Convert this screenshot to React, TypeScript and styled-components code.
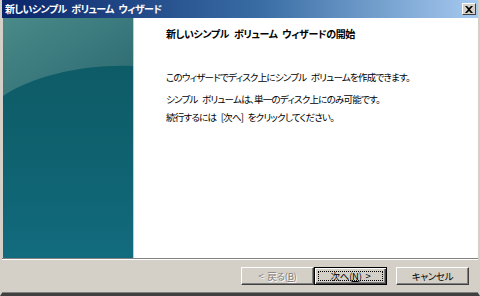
import styled, { createGlobalStyle } from 'styled-components';

const GlobalStyle = createGlobalStyle`
  html, body {
    margin: 0;
    padding: 0;
    background: #d4d0c8;
  }
  body {
    font-family: "Noto Sans CJK JP", "Liberation Sans", sans-serif;
  }
`;

const Window = styled.div`
  width: 480px;
  height: 296px;
  box-sizing: border-box;
  display: flex;
  flex-direction: column;
  background: #d4d0c8;
  border-left: 2px solid #d4d0c8;
  border-right: 2px solid #d4d0c8;
  border-bottom: 3px solid #404040;
  box-shadow: inset 0 -1px 0 #808080;
  font-feature-settings: "palt";
  word-spacing: 3px;
`;

const TitleBar = styled.div`
  height: 18px;
  flex: none;
  display: flex;
  align-items: center;
  justify-content: space-between;
  padding: 0 2px 0 3px;
  background: linear-gradient(90deg, #0a246a 0%, #3a6ea5 55%, #a6caf0 100%);
`;

const TitleText = styled.span`
  color: #ffffff;
  font-size: 10px;
  font-weight: 700;
  line-height: 18px;
  letter-spacing: -0.6px;
`;

const CloseButton = styled.div`
  width: 14px;
  height: 12px;
  box-sizing: border-box;
  background: #d4d0c8;
  border-top: 1px solid #ffffff;
  border-left: 1px solid #ffffff;
  border-right: 1px solid #404040;
  border-bottom: 1px solid #404040;
  display: flex;
  align-items: center;
  justify-content: center;
`;

const Body = styled.div`
  flex: none;
  height: 240px;
  display: flex;
  margin-left: 1px;
`;

const SidePanel = styled.div`
  width: 130px;
  flex: none;
  border-right: 1px solid #bcd0d4;
  background: linear-gradient(180deg, #0d5862 0%, #0f6270 60%, #126b7e 100%);
`;

const Content = styled.div`
  flex: 1;
  background: #ffffff;
  padding: 8px 20px 0 32px;
`;

const Heading = styled.h1`
  margin: 0 0 28px;
  font-size: 10px;
  font-weight: 700;
  line-height: 16px;
  letter-spacing: -0.4px;
  color: #000000;
`;

const Para = styled.p<{ $gap: number }>`
  margin: 0 0 ${(p) => p.$gap}px;
  font-size: 9.5px;
  line-height: 14px;
  letter-spacing: -0.75px;
  color: #000000;
`;

const Separator = styled.div`
  height: 0;
  flex: none;
  border-top: 1px solid #808080;
  border-bottom: 1px solid #ffffff;
`;

const Footer = styled.div`
  flex: 1;
  display: flex;
  align-items: flex-start;
  justify-content: flex-end;
  padding: 7px 9px 0 0;
`;

const ButtonGroup = styled.div`
  display: flex;
  margin-right: 9px;
`;

const Button = styled.div<{ $default?: boolean; $disabled?: boolean }>`
  width: 73px;
  height: 18px;
  box-sizing: border-box;
  display: flex;
  align-items: center;
  justify-content: center;
  font-size: 9.5px;
  letter-spacing: -0.3px;
  word-spacing: 2px;
  background: #d4d0c8;
  color: ${(p) => (p.$disabled ? '#808080' : '#000000')};
  text-shadow: ${(p) => (p.$disabled ? '1px 1px 0 #ffffff' : 'none')};
  border: 1px solid ${(p) => (p.$default ? '#000000' : '#ffffff')};
  ${(p) =>
    p.$default
      ? 'box-shadow: inset 1px 1px 0 #ffffff, inset -1px -1px 0 #404040, inset -2px -2px 0 #808080;'
      : 'border-right-color: #404040; border-bottom-color: #404040; box-shadow: inset -1px -1px 0 #808080;'}
  position: relative;
`;

const FocusRing = styled.span`
  position: absolute;
  inset: 3px;
  border: 1px dotted #000000;
`;

const Key = styled.span`
  text-decoration: underline;
`;

function SideArt() {
  return (
    <svg width="130" height="240" viewBox="0 0 130 240" style={{ display: 'block' }}>
      <defs>
        <linearGradient id="top" x1="0" y1="0" x2="1" y2="1">
          <stop offset="0" stopColor="#4a8a89" />
          <stop offset="1" stopColor="#2a6870" />
        </linearGradient>
      </defs>
      <path d="M0 0 H130 V48 C80 46 30 58 0 78 Z" fill="url(#top)" />
    </svg>
  );
}

export default function App() {
  return (
    <>
      <GlobalStyle />
      <Window>
        <TitleBar>
          <TitleText>新しいシンプル ボリューム ウィザード</TitleText>
          <CloseButton>
            <svg width="8" height="7" viewBox="0 0 8 7">
              <path d="M0 0 L2 0 L4 2 L6 0 L8 0 L5 3.5 L8 7 L6 7 L4 5 L2 7 L0 7 L3 3.5 Z" fill="#000" />
            </svg>
          </CloseButton>
        </TitleBar>
        <Body>
          <SidePanel>
            <SideArt />
          </SidePanel>
          <Content>
            <Heading>新しいシンプル ボリューム ウィザードの開始</Heading>
            <Para $gap={8}>このウィザードでディスク上にシンプル ボリュームを作成できます。</Para>
            <Para $gap={4}>シンプル ボリュームは、単一のディスク上にのみ可能です。</Para>
            <Para $gap={0}>続行するには [次へ] をクリックしてください。</Para>
          </Content>
        </Body>
        <Separator />
        <Footer>
          <ButtonGroup>
            <Button $disabled>
              &lt; 戻る(<Key>B</Key>)
            </Button>
            <Button $default>
              <FocusRing />
              次へ(<Key>N</Key>) &gt;
            </Button>
          </ButtonGroup>
          <Button>キャンセル</Button>
        </Footer>
      </Window>
    </>
  );
}
